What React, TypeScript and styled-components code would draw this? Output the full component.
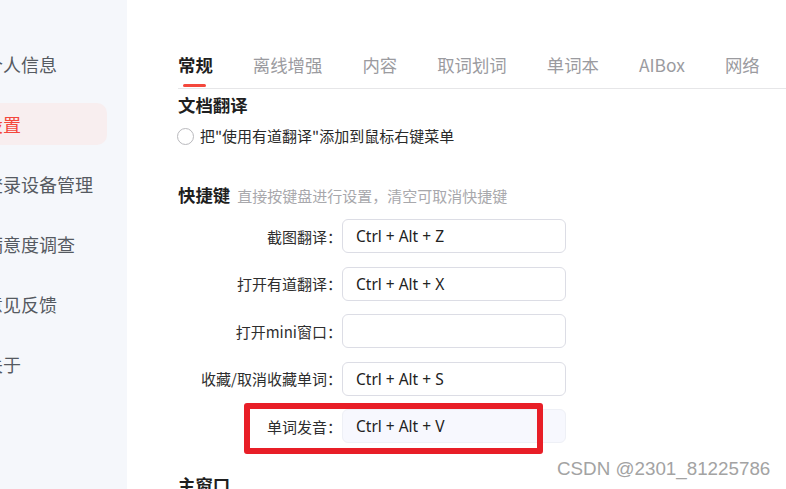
import React from 'react';
import styled, { createGlobalStyle } from 'styled-components';

const GlobalStyle = createGlobalStyle`
  html, body {
    margin: 0;
    padding: 0;
    background: #ffffff;
    overflow: hidden;
  }
  body {
    font-family: "Noto Sans CJK SC", "Noto Sans", sans-serif;
  }
`;

const Page = styled.div`
  position: relative;
  width: 786px;
  height: 489px;
  display: flex;
  overflow: hidden;
  background: #ffffff;
`;

const Sidebar = styled.nav`
  width: 127px;
  flex-shrink: 0;
  background: #f5f7fb;
  padding-top: 43px;
  display: flex;
  flex-direction: column;
  gap: 18px;
  overflow: hidden;
`;

const NavItem = styled.div<{ active?: boolean }>`
  flex-shrink: 0;
  width: 107px;
  height: 42px;
  display: flex;
  align-items: center;
  border-radius: 0 10px 10px 0;
  background: ${p => (p.active ? '#f8eeef' : 'transparent')};
  color: ${p => (p.active ? '#f4473c' : '#555a61')};
  font-size: 18px;
  white-space: nowrap;
`;

const NavText = styled.span`
  margin-left: -15px;
`;

const Main = styled.main`
  flex: 1;
  padding-left: 51px;
  padding-top: 50px;
  display: flex;
  flex-direction: column;
  min-height: 0;

  & > * {
    flex-shrink: 0;
  }
`;

const TabBar = styled.div`
  display: flex;
  gap: 40px;
  border-bottom: 1px solid #e6e6e8;
  height: 38px;
`;

const Tab = styled.div<{ active?: boolean }>`
  position: relative;
  font-size: 17.4px;
  line-height: 24px;
  padding-top: 3px;
  white-space: nowrap;
  color: ${p => (p.active ? '#1f1f1f' : '#9b9b9f')};
  font-weight: ${p => (p.active ? 700 : 400)};

  &::after {
    content: '';
    display: ${p => (p.active ? 'block' : 'none')};
    position: absolute;
    left: 5px;
    top: 34px;
    width: 23px;
    height: 3px;
    border-radius: 2px;
    background: #f4473c;
  }
`;

const SectionTitle = styled.div<{ top: number }>`
  margin-top: ${p => p.top}px;
  display: flex;
  align-items: baseline;
  gap: 7px;
  font-size: 17.4px;
  line-height: 24px;
  font-weight: 700;
  color: #1f1f1f;
`;

const Hint = styled.span`
  font-size: 15px;
  font-weight: 400;
  color: #a8a8ac;
`;

const RadioRow = styled.label`
  margin-top: 7px;
  display: flex;
  align-items: center;
  gap: 6px;
  font-size: 15px;
  line-height: 24px;
  color: #2a2a2a;
`;

const Radio = styled.span`
  width: 15px;
  height: 15px;
  border-radius: 50%;
  border: 1px solid #b9b9bd;
  background: #fff;
  margin-left: -1px;
`;

const Form = styled.div`
  margin-top: 11px;
  display: flex;
  flex-direction: column;
  gap: 13.5px;
`;

const Row = styled.div`
  display: flex;
  align-items: center;
`;

const Label = styled.div`
  width: 184px;
  margin-left: -20px;
  text-align: right;
  font-size: 15px;
  color: #2e2e2e;
  white-space: nowrap;
`;

const KeyInput = styled.div<{ muted?: boolean }>`
  width: 209px;
  height: 32px;
  display: flex;
  align-items: center;
  padding-left: 13px;
  border-radius: 6px;
  border: 1px solid ${p => (p.muted ? '#eef0f6' : '#dcdde5')};
  background: ${p => (p.muted ? '#f7f8fe' : '#ffffff')};
  font-family: "Noto Sans", "Noto Sans CJK SC", sans-serif;
  font-size: 15.5px;
  color: #222;
`;

const Annotation = styled.div`
  position: absolute;
  left: 244px;
  top: 403px;
  width: 299px;
  height: 51px;
  box-sizing: border-box;
  border: 6.5px solid #e81e27;
  border-radius: 3px;
  pointer-events: none;
`;

const Watermark = styled.div`
  position: absolute;
  left: 557px;
  top: 458px;
  font-family: "Liberation Sans", Arial, sans-serif;
  font-size: 18.8px;
  color: #a3a3a3;
  white-space: nowrap;
`;

const navItems = ['个人信息', '设置', '登录设备管理', '满意度调查', '意见反馈', '关于'];
const tabs = ['常规', '离线增强', '内容', '取词划词', '单词本', 'AIBox', '网络'];
const shortcuts = [
  { label: '截图翻译：', value: 'Ctrl + Alt + Z' },
  { label: '打开有道翻译：', value: 'Ctrl + Alt + X' },
  { label: '打开mini窗口：', value: '' },
  { label: '收藏/取消收藏单词：', value: 'Ctrl + Alt + S' },
  { label: '单词发音：', value: 'Ctrl + Alt + V', muted: true },
];

export default function App() {
  return (
    <Page>
      <GlobalStyle />
      <Sidebar>
        {navItems.map(item => (
          <NavItem key={item} active={item === '设置'}>
            <NavText>{item}</NavText>
          </NavItem>
        ))}
      </Sidebar>
      <Main>
        <TabBar>
          {tabs.map(t => (
            <Tab key={t} active={t === '常规'}>{t}</Tab>
          ))}
        </TabBar>
        <SectionTitle top={4}>文档翻译</SectionTitle>
        <RadioRow>
          <Radio />
          把"使用有道翻译"添加到鼠标右键菜单
        </RadioRow>
        <SectionTitle top={35}>
          快捷键<Hint>直接按键盘进行设置，清空可取消快捷键</Hint>
        </SectionTitle>
        <Form>
          {shortcuts.map(s => (
            <Row key={s.label}>
              <Label>{s.label}</Label>
              <KeyInput muted={s.muted}>{s.value}</KeyInput>
            </Row>
          ))}
        </Form>
        <SectionTitle top={30}>主窗口</SectionTitle>
      </Main>
      <Annotation />
      <Watermark>CSDN @2301_81225786</Watermark>
    </Page>
  );
}
